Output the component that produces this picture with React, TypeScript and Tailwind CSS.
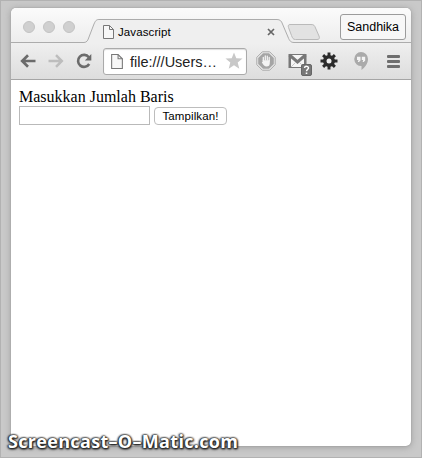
import React from "react";

const arial = "font-['Liberation_Sans',Arial,sans-serif]";

function PageIcon({ className }: { className: string }) {
  return (
    <svg viewBox="0 0 11 14" className={className} fill="#f7f7f7" stroke="#777" strokeWidth="1">
      <path d="M.5.5h6l4 4v9H.5z" />
      <path d="M6.500.5v4h4" fill="none" />
    </svg>
  );
}

function TabStrip() {
  return (
    <div className="relative flex h-[35px] bg-gradient-to-b from-[#fbfbfb] to-[#ededed]">
      <svg className="absolute left-0 top-0 h-[36px] w-[400px]" viewBox="0 0 400 36" fill="none">
        <path
          d="M0 34.5H73C76 34.5 77 32 78 29L83 16C84.500 12.500 85.500 11.500 88 11.500H266C269 11.500 270.500 13 271.500 16L277 29C278.500 33 280 34.500 283 34.500H400V36H0Z"
          fill="#efefef"
        />
        <path
          d="M0 34.5H73C76 34.5 77 32 78 29L83 16C84.500 12.500 85.500 11.500 88 11.500H266C269 11.500 270.500 13 271.500 16L277 29C278.500 33 280 34.500 283 34.500H400"
          stroke="#acacac"
        />
        <path
          d="M279 16.500H300C303 16.500 303.500 17.500 304.500 20L308 28C309 30.500 308 31.500 306 31.500H284.500C282 31.500 281.500 30 280.500 27.500L277.500 19.500C276.800 17.500 277.500 16.500 279 16.500Z"
          fill="#e2e2e2"
          stroke="#bababa"
        />
      </svg>
      <div className="relative flex w-[91px] gap-2 pl-3 pt-[13px]">
        <i className="size-3 rounded-full border border-[#c3c3c3] bg-[#d0d0d0]" />
        <i className="size-3 rounded-full border border-[#c3c3c3] bg-[#d0d0d0]" />
        <i className="size-3 rounded-full border border-[#c3c3c3] bg-[#d0d0d0]" />
      </div>
      <div className="relative flex w-[238px] pl-px pt-[17px]">
        <PageIcon className="h-[14px] w-[11px]" />
        <span className="ml-1 text-[11.5px] leading-[14px] tracking-[0.1px] text-black">Javascript</span>
        <svg viewBox="0 0 8 8" className="ml-auto mr-[65px] mt-[3px] size-2" stroke="#666" strokeWidth="1.7">
          <path d="M1 1l6 6M7 1L1 7" />
        </svg>
      </div>
      <div className="relative mt-[6px] flex h-[26px] w-[66px] items-center justify-center rounded-[3px] border border-[#9b9b9b] bg-[#f7f7f7] pt-px text-[12.5px] text-black">
        Sandhika
      </div>
    </div>
  );
}

function Toolbar() {
  return (
    <div className="flex h-[37px] items-center border-b border-[#a5a5a5] bg-gradient-to-b from-[#efefef] to-[#dddddd]">
      <svg viewBox="0 0 16 14" className="ml-[9px] h-[14px] w-4" fill="none" stroke="#6b6b6b" strokeWidth="2.7">
        <path d="M15.500 7H2.500M8 1.200L2.200 7L8 12.800" />
      </svg>
      <svg viewBox="0 0 16 14" className="ml-[12px] h-[14px] w-4" fill="none" stroke="#bdbdbd" strokeWidth="2.500">
        <path d="M.5 7H13.500M8 1.200L13.800 7L8 12.800" />
      </svg>
      <svg viewBox="0 0 16 16" className="ml-[12px] size-4" fill="none">
        <path d="M12.800 4.200A6 6 0 1 0 13.200 11" stroke="#6b6b6b" strokeWidth="2.600" />
        <path d="M15.300 1V7.400H8.800Z" fill="#6b6b6b" />
      </svg>
      <div className="ml-[11px] flex h-[27px] w-[144px] items-center rounded-[3px] border border-[#aaa] bg-white shadow-[inset_0_1px_1px_#ddd]">
        <PageIcon className="ml-[7px] h-[15px] w-[12px]" />
        <span className="ml-[7px] whitespace-nowrap pt-px text-[14.5px] leading-4 text-[#222]">file:///Users…</span>
        <svg viewBox="0 0 18 18" className="ml-auto mr-[3px] size-[18px] shrink-0" fill="#c8c8c8">
          <path d="M9 .5l2.300 5.700 6.200.4-4.800 4 1.600 6.100L9 13.300l-5.300 3.400 1.600-6.100-4.800-4 6.200-.4z" />
        </svg>
      </div>
      <svg viewBox="0 0 20 20" className="ml-[9px] size-5">
        <path d="M6.300.8h7.400l5.500 5.500v7.400l-5.500 5.500H6.300L.8 13.700V6.300z" fill="#e8e8e8" stroke="#aaa" />
        <path d="M7 2.200h6l4.800 4.800v6L13 17.800H7L2.200 13V7z" fill="#a5a5a5" />
        <path d="M7.300 10V6.300M9.300 9V4.800M11.300 9V5.200M13.200 10V6.500" stroke="#f3f3f3" strokeWidth="1.300" strokeLinecap="round" />
        <path d="M6.700 9.200h7.100v3c0 2-1 3.300-3.200 3.300-2 0-3.100-1-4.800-4.200l.9-.5z" fill="#f3f3f3" />
      </svg>
      <svg viewBox="0 0 25 23" className="ml-3 mt-[6px] h-[23px] w-[25px]">
        <path d="M.5 1h18v14H.5z" fill="#777" />
        <path d="M3 2h13v12H3z" fill="#f5f5f5" />
        <path d="M1.500 2l8 7 8-7" fill="none" stroke="#777" strokeWidth="3" />
        <path d="M3 14l5-5M16 14l-5-5" stroke="#c7c7c7" />
        <rect x="13.500" y="11.500" width="10" height="11" rx="1.500" fill="#777" stroke="#666" />
        <path d="M16.500 15c.3-2.500 4.500-2 4 .2-.2 1.200-2 1.300-2 3" fill="none" stroke="#fff" strokeWidth="1.400" />
        <path d="M17.700 19.400h1.600V21h-1.600z" fill="#fff" />
      </svg>
      <svg viewBox="0 0 18 18" className="ml-[7px] size-[18px]">
        <path d="M9 .5v17M.5 9h17M3.100 3.100l11.800 11.800M14.900 3.100L3.100 14.900" stroke="#2b2b2b" strokeWidth="2.900" />
        <circle cx="9" cy="9" r="6" fill="#2b2b2b" />
        <circle cx="9" cy="9" r="2.500" fill="#eee" />
      </svg>
      <svg viewBox="0 0 14 18" className="ml-4 h-[18px] w-[14px]">
        <path d="M7 0a7 7 0 0 1 7 7c0 5-3.500 8.500-6.500 11v-4A7 7 0 1 1 7 0z" fill="#aaa" />
        <path d="M3 4.800h3.500v3.600L5 10H3.800l.7-2H3zM7.800 4.800h3.400v3.600L9.800 10H8.600l.6-2H7.800z" fill="#f4f4f4" />
      </svg>
      <div className="ml-[19px] flex w-[13px] flex-col gap-[2px]">
        <i className="h-[3px] rounded-[1px] bg-[#6e6e6e]" />
        <i className="h-[3px] rounded-[1px] bg-[#6e6e6e]" />
        <i className="h-[3px] rounded-[1px] bg-[#6e6e6e]" />
      </div>
    </div>
  );
}

export default function App() {
  return (
    <div className={`relative h-[458px] w-[422px] overflow-hidden border border-[#b2b2b2] bg-[#c9c9c9] pl-[10px] pt-[7px] ${arial}`}>
      <div className="h-[438px] w-[400px] overflow-hidden rounded-[5px] bg-white shadow-[0_0_1px_#777,0_1px_7px_#9b9b9b]">
        <TabStrip />
        <Toolbar />
        <main className="px-2 pt-2">
          <label htmlFor="rows" className="block font-['Liberation_Serif','Times_New_Roman',serif] text-[16px] leading-[18px] text-black">
            Masukkan Jumlah Baris
          </label>
          <div className="flex items-center gap-1">
            <input id="rows" className="h-[19px] w-[131px] border border-[#b9b9b9] bg-white outline-none" />
            <button className="mt-px h-[18px] w-[73px] whitespace-nowrap rounded-[4px] border border-[#bdbdbd] bg-white text-[11.5px] leading-[15px] tracking-[0.1px] text-black">
              Tampilkan!
            </button>
          </div>
        </main>
      </div>
      <div className="absolute left-[7px] top-[428px] whitespace-nowrap font-['Open_Sans','Noto_Sans',sans-serif] text-[18px] font-bold leading-6 tracking-[0.32px] text-white [text-shadow:0_0_2px_#222,0_0_2px_#222,1px_1px_2px_#222,-1px_0_2px_#333,0_1px_3px_#333]">
        Screencast–O–Matic.com
      </div>
    </div>
  );
}
